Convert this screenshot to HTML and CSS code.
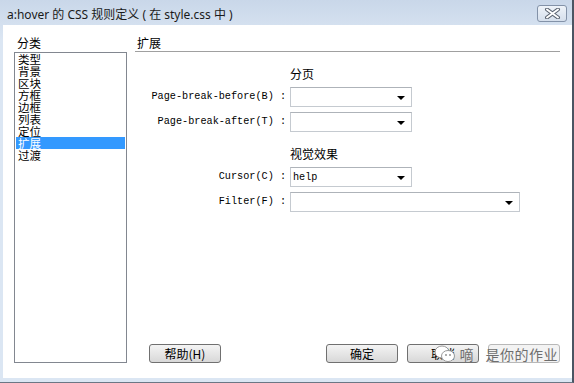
FILE: index.html
```html
<!DOCTYPE html>
<html lang="zh-CN">
<head>
    <meta charset="UTF-8">
    <title>a:hover 的 CSS 规则定义</title>
    <link rel="stylesheet" href="styles.css">
</head>
<body>

    <div class="window">
        <!-- Title bar -->
        <div class="titlebar">
            <span class="title">a:hover 的 CSS 规则定义 ( 在 style.css 中 )</span>
            <button class="close-btn" aria-label="关闭">
                <svg width="17" height="11" viewBox="0 0 17 11">
                    <path d="M3 1.5 L14 9.5 M14 1.5 L3 9.5" stroke="#5a6370" stroke-width="4" stroke-linecap="round"/>
                    <path d="M3 1.5 L14 9.5 M14 1.5 L3 9.5" stroke="#ffffff" stroke-width="2" stroke-linecap="round"/>
                </svg>
            </button>
        </div>

        <div class="client">
            <!-- Category list -->
            <div class="category">
                <div class="section-label">分类</div>
                <ul class="category-list">
                    <li>类型</li>
                    <li>背景</li>
                    <li>区块</li>
                    <li>方框</li>
                    <li>边框</li>
                    <li>列表</li>
                    <li>定位</li>
                    <li class="selected">扩展</li>
                    <li>过渡</li>
                </ul>
            </div>

            <!-- Extension panel -->
            <div class="panel">
                <div class="panel-header">扩展</div>

                <div class="form">
                    <div class="group-title">分页</div>
                    <label class="field-label">Page-break-before(B) :</label>
                    <div class="dropdown"><span></span><i class="arrow"></i></div>
                    <label class="field-label">Page-break-after(T) :</label>
                    <div class="dropdown"><span></span><i class="arrow"></i></div>

                    <div class="group-title second">视觉效果</div>
                    <label class="field-label">Cursor(C) :</label>
                    <div class="dropdown"><span>help</span><i class="arrow"></i></div>
                    <label class="field-label">Filter(F) :</label>
                    <div class="dropdown wide"><span></span><i class="arrow"></i></div>
                </div>

                <div class="buttons">
                    <button class="btn">帮助(H)</button>
                    <div class="spacer"></div>
                    <button class="btn">确定</button>
                    <button class="btn">取消</button>
                    <button class="btn faded"></button>
                    <div class="watermark">
                        <svg width="22" height="18" viewBox="0 0 22 18">
                            <ellipse cx="8" cy="7" rx="7" ry="6" fill="#ffffff" stroke="#9a9a9a" stroke-width="1"/>
                            <ellipse cx="14" cy="11" rx="6.5" ry="5.5" fill="#ffffff" stroke="#9a9a9a" stroke-width="1"/>
                            <circle cx="12" cy="10" r="0.9" fill="#8a8a8a"/>
                            <circle cx="16" cy="10" r="0.9" fill="#8a8a8a"/>
                        </svg>
                        <span class="wm-text">嘀</span>
                        <span class="wm-text wm-name">是你的作业</span>
                    </div>
                </div>
            </div>
        </div>
    </div>

</body>
</html>
```

FILE: styles.css
```css
/* Window frame */
body {
    margin: 0;
    padding: 0;
    background: #ffffff;
    font-family: "Noto Sans CJK SC", "Noto Sans", sans-serif;
    color: #000;
}

.window {
    width: 572px;
    height: 382px;
    background: linear-gradient(#c9d7e9, #dbe6f3 40px, #dbe6f3);
    border-right: 2px solid #4b5563;
    border-bottom: 1px solid #6b7785;
    display: flex;
    flex-direction: column;
}

.titlebar {
    height: 25px;
    display: flex;
    align-items: center;
    justify-content: space-between;
    padding: 0 5px 0 7px;
}

.title {
    font-family: "Noto Sans", "Noto Sans CJK SC", sans-serif;
    font-size: 12px;
    color: #1a1a1a;
    margin-top: 2px;
}

.close-btn {
    width: 30px;
    height: 17px;
    margin-top: 1px;
    padding: 0;
    border: 1px solid #8392a8;
    border-radius: 3px;
    background: linear-gradient(#eef3f9, #d5dfec);
    display: flex;
    align-items: center;
    justify-content: center;
}

.client {
    flex: 1;
    margin: 0 0 4px 3px;
    background: #ffffff;
    display: flex;
    padding: 10px 12px 15px 11px;
}

/* Category list */
.category {
    width: 113px;
    display: flex;
    flex-direction: column;
}

.section-label {
    font-size: 12px;
    line-height: 16px;
    height: 17px;
    padding-left: 3px;
}

.category-list {
    flex: 1;
    margin: 0;
    padding: 0 1px;
    list-style: none;
    border: 1px solid #828790;
}

.category-list li {
    font-size: 11.5px;
    line-height: 12px;
    height: 12px;
    padding-left: 2px;
}

.category-list li.selected {
    background: #3399ff;
    color: #ffffff;
}

/* Right panel */
.panel {
    flex: 1;
    margin-left: 8px;
    display: flex;
    flex-direction: column;
}

.panel-header {
    font-size: 12px;
    line-height: 16px;
    padding-left: 2px;
    border-bottom: 1px solid #a0a0a0;
}

.form {
    display: grid;
    grid-template-columns: 155px auto;
    justify-items: start;
    row-gap: 5px;
    margin-top: 14px;
}

.group-title {
    grid-column: 2;
    font-size: 12px;
    line-height: 16px;
}

.group-title.second {
    margin-top: 9px;
}

.field-label {
    grid-column: 1;
    justify-self: end;
    padding-right: 4px;
    font-family: "Liberation Mono", monospace;
    font-size: 10.2px;
    line-height: 20px;
    white-space: pre;
    color: #000;
}

.dropdown {
    grid-column: 2;
    box-sizing: border-box;
    width: 122px;
    height: 20px;
    border: 1px solid #c5cad0;
    border-top-color: #aeb3b9;
    display: flex;
    align-items: center;
    justify-content: space-between;
    padding: 0 6px 0 2px;
    font-family: "Liberation Mono", monospace;
    font-size: 10.2px;
}

.dropdown.wide {
    width: 230px;
}

.arrow {
    width: 0;
    height: 0;
    border-left: 4px solid transparent;
    border-right: 4px solid transparent;
    border-top: 4px solid #000;
    margin-top: 2px;
}

/* Bottom buttons */
.buttons {
    margin-top: auto;
    display: flex;
    gap: 9px;
    padding-left: 14px;
    position: relative;
}

.spacer {
    flex: 1;
}

.btn {
    width: 72px;
    height: 19px;
    padding: 0;
    border: 1px solid #707070;
    border-radius: 3px;
    background: linear-gradient(#f4f4f4, #e6e6e6 50%, #d8d8d8);
    font-family: "Noto Sans CJK SC", sans-serif;
    font-size: 12px;
    line-height: 16px;
    color: #000;
}

.btn.faded {
    border-color: #b8b8b8;
    background: #f3f3f3;
}

.watermark {
    position: absolute;
    right: 2px;
    top: 1px;
    display: flex;
    align-items: center;
    gap: 4px;
}

.wm-text {
    font-size: 14px;
    line-height: 18px;
    color: #6e6e6e;
}

.wm-name {
    margin-left: 8px;
    letter-spacing: 0.5px;
}
```
